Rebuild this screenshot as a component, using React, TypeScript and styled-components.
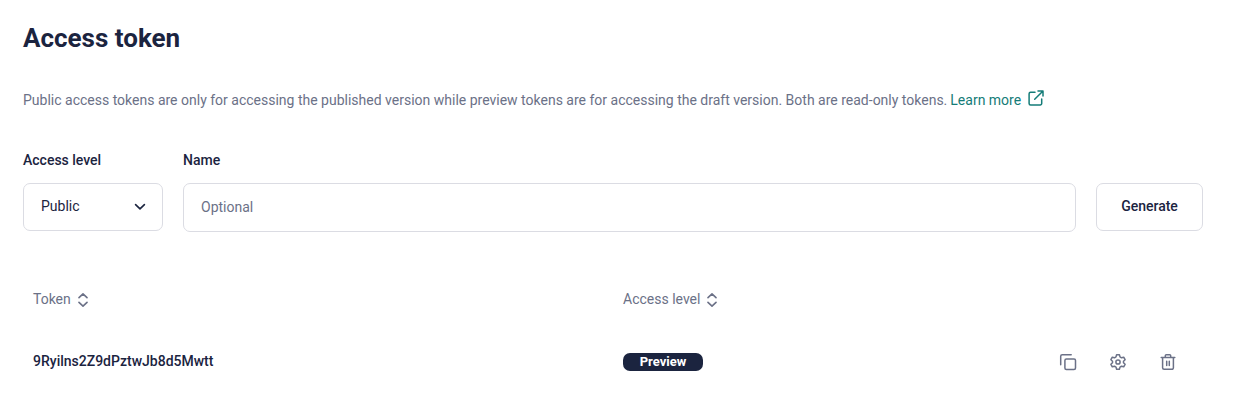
import React from "react";
import styled, { createGlobalStyle } from "styled-components";

const Global = createGlobalStyle`
  *{box-sizing:border-box}
  body{margin:0;background:#fff;font-family:Roboto,sans-serif;font-size:14px;color:#1b243f}
`;
const Page = styled.main`padding:22px 31px 0 23px;height:412px;overflow:hidden;`;
const Title = styled.h1`margin:0;font-size:26px;line-height:32px;font-weight:700;`;
const Intro = styled.p`margin:35px 0 0;height:24px;line-height:22px;color:#6b7187;white-space:nowrap;display:flex;gap:3px;`;
const Link = styled.a`color:#147c78;display:flex;`;
const LinkIcon = styled.svg`width:18px;height:18px;margin-left:6px;`;
const Form = styled.div`margin-top:37px;display:grid;grid-template-columns:140px 893px 107px;column-gap:20px;align-items:start;`;
const Field = styled.div`display:flex;flex-direction:column;`;
const Label = styled.label`font-weight:500;line-height:20px;height:33px;`;
const Select = styled.div`height:48px;border:1px solid #dbdce3;border-radius:7px;padding:0 16px 2px 17px;display:flex;align-items:center;justify-content:space-between;`;
const Input = styled.input`height:49px;border:1px solid #dbdce3;border-radius:7px;padding:0 17px 2px;font:14px Roboto,sans-serif;&::placeholder{color:#6b7187;opacity:1}`;
const Button = styled.button`margin-top:33px;height:48px;border:1px solid #dbdce3;border-radius:7px;background:#fff;color:#1b243f;font:500 14px Roboto,sans-serif;padding:0 0 2px;`;
const Table = styled.div`margin-top:57px;padding:0 10px;`;
const Row = styled.div`display:grid;grid-template-columns:590px 1fr auto;align-items:center;`;
const Head = styled(Row)`height:20px;color:#6b7187;`;
const Body = styled(Row)`margin-top:41px;height:24px;`;
const Heading = styled.div`display:flex;align-items:center;gap:6px;`;
const Token = styled.span`font-weight:500;padding-bottom:2px;`;
const Badge = styled.span`width:80px;height:18px;border-radius:7px;background:#1b243f;color:#fff;font-size:13px;font-weight:700;line-height:18px;text-align:center;`;
const Actions = styled.div`display:flex;gap:26px;padding-right:13px;color:#6b7187;`;
const Icon = styled.svg`width:24px;height:24px;display:block;`;
const stroke = { fill: "none", stroke: "currentColor", strokeLinecap: "round", strokeLinejoin: "round" } as const;

const Sort = () => (
  <svg width="12" height="16" viewBox="0 0 12 16" {...stroke} strokeWidth="1.6"><path d="m2 6.6 4-3.7 4 3.7M2 11.4l4 3.7 4-3.7" /></svg>
);

export default function App() {
  return (
    <>
      <Global />
      <Page>
        <Title>Access token</Title>
        <Intro>
          <span>Public access tokens are only for accessing the published version while preview tokens are for accessing the draft version. Both are read-only tokens.</span>
          <Link>Learn more
            <LinkIcon viewBox="0 0 18 18" {...stroke} strokeWidth="1.5"><path d="M8 3.3H3.6a1.5 1.5 0 0 0-1.5 1.5v9.6a1.5 1.5 0 0 0 1.5 1.5h9.6a1.5 1.5 0 0 0 1.5-1.5V10M11 2h5v5M7.7 10.3 16 2" /></LinkIcon>
          </Link>
        </Intro>
        <Form>
          <Field><Label>Access level</Label>
            <Select>Public<svg width="12" height="8" viewBox="0 0 12 8" {...stroke} strokeWidth="1.6"><path d="m1.6 2.6 4.4 4.3 4.4-4.3" /></svg></Select>
          </Field>
          <Field><Label>Name</Label><Input placeholder="Optional" /></Field>
          <Button>Generate</Button>
        </Form>
        <Table>
          <Head><Heading>Token <Sort /></Heading><Heading>Access level <Sort /></Heading></Head>
          <Body>
            <Token>9Ryilns2Z9dPztwJb8d5Mwtt</Token>
            <Badge>Preview</Badge>
            <Actions>
              <Icon viewBox="0 0 24 24" {...stroke} strokeWidth="1.5"><rect x="8.9" y="8.9" width="10.6" height="10.6" rx="1.5" /><path d="M15.2 4.7H6.2a1.5 1.5 0 0 0-1.5 1.5v8.6" /></Icon>
              <Icon viewBox="0 0 24 24" {...stroke} strokeWidth="1.5"><path d="M10.6 4.7h2.8l.6 2.2 1.5.9 2.2-.6 1.4 2.5-1.6 1.5v1.6l1.6 1.5-1.4 2.5-2.2-.6-1.5.9-.6 2.2h-2.8l-.6-2.2-1.5-.9-2.2.6-1.4-2.5 1.6-1.5v-1.6l-1.6-1.5 1.4-2.5 2.2.6 1.5-.9z" /><circle cx="12" cy="12" r="2.1" /></Icon>
              <Icon viewBox="0 0 24 24" {...stroke} strokeWidth="1.5"><path d="M5.2 7.6h13.6M17.4 7.6v10.2a1.5 1.5 0 0 1-1.5 1.5H8.1a1.5 1.5 0 0 1-1.5-1.5V7.6M9.3 7.6V5.7a1 1 0 0 1 1-1h3.4a1 1 0 0 1 1 1v1.9M10.7 11.2v4.4M13.3 11.2v4.4" /></Icon>
            </Actions>
          </Body>
        </Table>
      </Page>
    </>
  );
}
